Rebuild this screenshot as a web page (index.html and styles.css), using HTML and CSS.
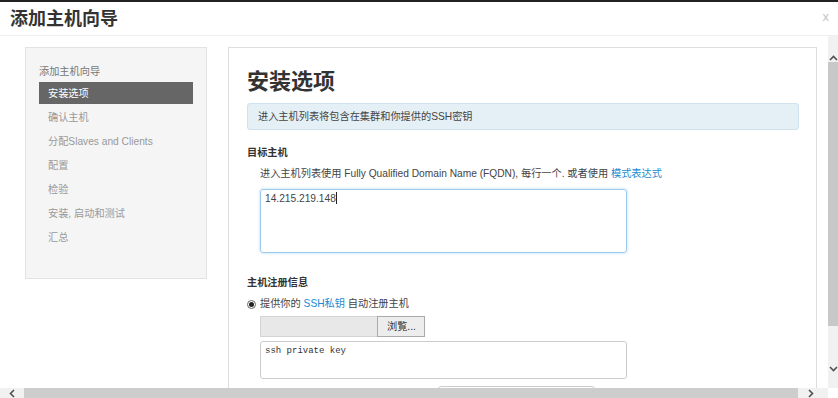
FILE: index.html
```html
<!DOCTYPE html>
<html>
<head>
    <title>添加主机向导</title>
    <meta charset="utf-8">
    <link rel="stylesheet" href="styles.css">
</head>
<body>
    <div class="topbar"></div>
    <div class="modal-header">
        <h3>添加主机向导</h3>
        <span class="close">x</span>
    </div>

    <div class="modal-body">
        <div class="viewport">
            <div class="wizard">
                <div class="wizard-nav">
                    <div class="nav-title">添加主机向导</div>
                    <div class="nav-item active">安装选项</div>
                    <div class="nav-item">确认主机</div>
                    <div class="nav-item">分配Slaves and Clients</div>
                    <div class="nav-item">配置</div>
                    <div class="nav-item">检验</div>
                    <div class="nav-item">安装, 启动和测试</div>
                    <div class="nav-item">汇总</div>
                </div>

                <div class="wizard-panel">
                    <h2>安装选项</h2>
                    <div class="alert">进入主机列表将包含在集群和你提供的SSH密钥</div>

                    <div class="section-label">目标主机</div>
                    <div class="indent">
                        <div class="help">进入主机列表使用 Fully Qualified Domain Name (FQDN), 每行一个. 或者使用 <a href="#">模式表达式</a></div>
                        <div class="hosts-box focused">14.215.219.148<span class="caret"></span></div>
                    </div>

                    <div class="section-label reg">主机注册信息</div>
                    <div class="radio-row">
                        <span class="radio"><span class="dot"></span></span>
                        <span>提供你的 <a href="#">SSH私钥</a> 自动注册主机</span>
                    </div>
                    <div class="indent">
                        <div class="file-input">
                            <div class="file-name"></div>
                            <div class="file-btn">浏覧...</div>
                        </div>
                        <div class="key-box">ssh private key</div>
                    </div>
                    <div class="next-field"></div>
                </div>
            </div>
        </div>

        <div class="vscroll">
            <div class="sb-btn">
                <svg width="9" height="6" viewBox="0 0 9 6"><polyline points="1,5 4.5,1.5 8,5" fill="none" stroke="#505050" stroke-width="1.6"/></svg>
            </div>
            <div class="vthumb"></div>
            <div class="sb-fill"></div>
            <div class="sb-btn">
                <svg width="9" height="6" viewBox="0 0 9 6"><polyline points="1,1 4.5,4.5 8,1" fill="none" stroke="#505050" stroke-width="1.6"/></svg>
            </div>
        </div>

        <div class="hscroll">
            <div class="sb-btn wide">
                <svg width="6" height="9" viewBox="0 0 6 9"><polyline points="5,1 1.5,4.5 5,8" fill="none" stroke="#505050" stroke-width="1.6"/></svg>
            </div>
            <div class="hthumb"></div>
            <div class="sb-btn wide right">
                <svg width="6" height="9" viewBox="0 0 6 9"><polyline points="1,1 4.5,4.5 1,8" fill="none" stroke="#505050" stroke-width="1.6"/></svg>
            </div>
        </div>
        <div class="corner"></div>
    </div>
</body>
</html>
```

FILE: styles.css
```css
body {
    margin: 0;
    width: 838px;
    height: 398px;
    overflow: hidden;
    background: white;
    font-family: "Liberation Sans", "Noto Sans CJK SC", sans-serif;
    font-size: 10.2px;
    color: #333;
}
a {
    color: #1a8ad2;
    text-decoration: none;
}
.topbar {
    height: 2px;
    background: #222;
}
.modal-header {
    height: 33px;
    border-bottom: 1px solid #eee;
    display: flex;
    align-items: center;
    justify-content: space-between;
    padding: 0 10px;
}
.modal-header h3 {
    margin: 0;
    font-size: 18px;
    font-weight: bold;
    color: #333;
    line-height: 24px;
}
.close {
    color: #c4c4c4;
    font-size: 13px;
    margin-right: -1px;
    margin-top: -4px;
}
.modal-body {
    display: grid;
    grid-template-columns: 828px 10px;
    grid-template-rows: 352px 10px;
}
.viewport {
    overflow: hidden;
    padding: 11px 0 0 25px;
}
.wizard {
    display: flex;
    gap: 21px;
    align-items: flex-start;
}
.wizard-nav {
    width: 154px;
    height: 214px;
    padding: 16px 13px 0 13px;
    background: #f5f5f5;
    border: 1px solid #e3e3e3;
    flex-shrink: 0;
}
.nav-title {
    line-height: 16px;
    color: #777;
    margin-bottom: 2px;
}
.nav-item {
    height: 22px;
    line-height: 23px;
    margin-bottom: 2px;
    padding-left: 9px;
    color: #999;
}
.nav-item.active {
    background: #666;
    color: white;
}
.wizard-panel {
    width: 552px;
    height: 400px;
    padding: 19px 17px 0 18px;
    border: 1px solid #ddd;
    flex-shrink: 0;
}
.wizard-panel h2 {
    margin: 0;
    font-size: 22px;
    line-height: 30px;
    font-weight: bold;
    color: #333;
}
.alert {
    margin-top: 6px;
    padding: 5px 10px;
    line-height: 15px;
    background: #e5f0f6;
    border: 1px solid #cfe2ed;
    border-radius: 3px;
    color: #444;
}
.section-label {
    margin-top: 15px;
    line-height: 16px;
    font-weight: bold;
    color: #333;
}
.section-label.reg {
    margin-top: 22px;
}
.indent {
    padding-left: 13px;
}
.help {
    margin-top: 5px;
    line-height: 16px;
    color: #444;
}
.hosts-box {
    margin-top: 7px;
    width: 357px;
    height: 59px;
    padding: 2px 4px 1px 4px;
    line-height: 12px;
    border: 1px solid #9ccaee;
    border-radius: 3px;
    box-shadow: 0 0 3px rgba(82, 168, 236, 0.45);
    color: #444;
}
.caret {
    display: inline-block;
    width: 1px;
    height: 12px;
    background: #222;
    vertical-align: -2px;
}
.radio-row {
    margin-top: 5px;
    display: flex;
    align-items: center;
    gap: 4px;
    line-height: 16px;
    color: #444;
}
.radio {
    width: 7px;
    height: 7px;
    border: 1px solid #666;
    border-radius: 50%;
    display: flex;
    align-items: center;
    justify-content: center;
}
.dot {
    width: 5px;
    height: 5px;
    border-radius: 50%;
    background: #222;
}
.file-input {
    margin-top: 4px;
    display: flex;
    height: 21px;
}
.file-name {
    width: 116px;
    background: #e8e8e8;
    border: 1px solid #d4d4d4;
    border-right: none;
}
.file-btn {
    width: 48px;
    box-sizing: border-box;
    background: #ededed;
    border: 1px solid #aaa;
    line-height: 19px;
    padding-left: 9px;
    color: #333;
}
.key-box {
    margin-top: 4px;
    width: 357px;
    height: 33px;
    padding: 3px 4px 0 4px;
    line-height: 12px;
    border: 1px solid #ccc;
    border-radius: 3px;
    font-family: "Liberation Mono", monospace;
    font-size: 9px;
    color: #333;
}
.next-field {
    margin: 7px 0 0 191px;
    width: 155px;
    height: 20px;
    border: 1px solid #ccc;
    border-radius: 3px;
}
.vscroll {
    background: #f1f1f1;
    display: flex;
    flex-direction: column;
}
.sb-btn {
    display: flex;
    align-items: center;
    justify-content: center;
    height: 30px;
    flex-shrink: 0;
}
.vscroll .sb-btn:first-child {
    height: 25px;
    align-items: flex-end;
    padding-bottom: 1px;
}
.vthumb {
    height: 264px;
    background: #c8c8c8;
}
.sb-fill {
    flex: 1;
}
.vscroll .sb-btn:last-child {
    height: 22px;
    align-items: flex-start;
}
.hscroll {
    background: #f1f1f1;
    display: flex;
}
.sb-btn.wide {
    height: auto;
    width: 24px;
}
.sb-btn.wide.right {
    width: 30px;
    justify-content: flex-start;
    padding-left: 10px;
    box-sizing: border-box;
}
.hthumb {
    flex: 1;
    background: #cdcdcd;
}
.corner {
    background: white;
}
```
